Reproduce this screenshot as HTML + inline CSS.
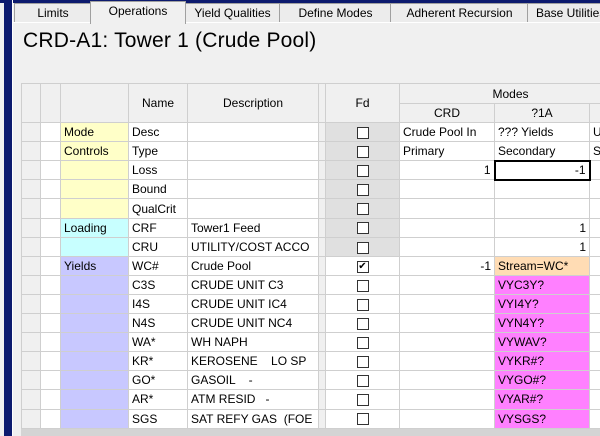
<!DOCTYPE html><html><head><style>
body{margin:0;width:600px;height:436px;overflow:hidden;background:#f0f0f0;font-family:"Liberation Sans",sans-serif;position:relative}
.a{position:absolute;box-sizing:border-box}
.tab{position:absolute;top:3px;height:19px;border:1px solid #a0a0a0;border-bottom:none;background:#ececec;font-size:12px;text-align:center;line-height:19px;color:#000}
table{border-collapse:collapse;position:absolute;left:21px;top:83px;width:600px;font-size:12px;table-layout:fixed}
td{border:1px solid #cfcfcf;height:19.1px;padding:0 3px;white-space:nowrap;overflow:hidden;background:#fff;line-height:16px;box-sizing:border-box}
.h{background:#f0f0f0;text-align:center}
.g{background:#f0f0f0}
.y{background:#ffffc8}.c{background:#c8ffff}.p{background:#c8c8ff}.m{background:#ff80ff}.o{background:#ffdcb4}
.f{background:#e0e0e0;text-align:center}
.r{text-align:right}
.cb{display:inline-block;width:10px;height:10px;border:1px solid #333;vertical-align:middle;background:#fff;font-size:10px;line-height:10px;box-sizing:content-box}
</style></head><body>
<div class="a" style="left:0;top:0;width:600px;height:3px;background:#0c1a6e"></div>
<div class="a" style="left:4px;top:0;width:8px;height:436px;background:#0c1a6e"></div>
<div class="a" style="left:12px;top:0;width:1px;height:436px;background:#fff"></div>
<div class="tab" style="left:14px;width:76px">Limits</div>
<div class="tab" style="left:90px;width:94px;top:1px;height:22px;background:#f0f0f0;z-index:2">Operations</div>
<div class="tab" style="left:184px;width:95px">Yield Qualities</div>
<div class="tab" style="left:279px;width:111px">Define Modes</div>
<div class="tab" style="left:390px;width:137px">Adherent Recursion</div>
<div class="tab" style="left:527px;width:80px;text-align:left;padding-left:8px">Base Utilities</div>
<div class="a" style="left:13px;top:22px;width:587px;height:1px;background:#fff"></div>
<div class="a" style="left:23px;top:29px;font-size:21px;letter-spacing:0.2px">CRD-A1: Tower 1 (Crude Pool)</div>
<div class="a" style="left:21px;top:428px;width:579px;height:8px;background:#d4d4d4"></div>
<table>
<colgroup><col style="width:19px"><col style="width:20px"><col style="width:68px"><col style="width:59px"><col style="width:131px"><col style="width:7px"><col style="width:74px"><col style="width:95px"><col style="width:95px"><col style="width:32px"></colgroup>
<tr><td class="h" rowspan=2 style="height:37px"></td><td class="h" rowspan=2></td><td class="h" rowspan=2></td><td class="h" rowspan=2>Name</td><td class="h" rowspan=2>Description</td><td class="g" rowspan=2></td><td class="h" rowspan=2>Fd</td><td class="h" colspan=3 style="height:20px">Modes</td></tr>
<tr><td class="h" style="height:17px">CRD</td><td class="h">?1A</td><td class="h"></td></tr>
<tr><td class="g"></td><td></td><td class="y">Mode</td><td>Desc</td><td></td><td class="g"></td><td class="f"><span class="cb"></span></td><td>Crude Pool In</td><td>??? Yields</td><td>U</td></tr>
<tr><td class="g"></td><td></td><td class="y">Controls</td><td>Type</td><td></td><td class="g"></td><td class="f"><span class="cb"></span></td><td>Primary</td><td>Secondary</td><td>S</td></tr>
<tr><td class="g"></td><td></td><td class="y"></td><td>Loss</td><td></td><td class="g"></td><td class="f"><span class="cb"></span></td><td class="r">1</td><td class="r" style="border:2px solid #000">-1</td><td></td></tr>
<tr><td class="g"></td><td></td><td class="y"></td><td>Bound</td><td></td><td class="g"></td><td class="f"><span class="cb"></span></td><td></td><td></td><td></td></tr>
<tr><td class="g"></td><td></td><td class="y"></td><td>QualCrit</td><td></td><td class="g"></td><td class="f"><span class="cb"></span></td><td></td><td></td><td></td></tr>
<tr><td class="g"></td><td></td><td class="c">Loading</td><td>CRF</td><td>Tower1 Feed</td><td class="g"></td><td class="f"><span class="cb"></span></td><td></td><td class="r">1</td><td></td></tr>
<tr><td class="g"></td><td></td><td class="c"></td><td>CRU</td><td>UTILITY/COST ACCO</td><td class="g"></td><td class="f"><span class="cb"></span></td><td></td><td class="r">1</td><td></td></tr>
<tr><td class="g"></td><td></td><td class="p">Yields</td><td>WC#</td><td>Crude Pool</td><td class="g"></td><td style="text-align:center"><span class="cb">✔</span></td><td class="r">-1</td><td class="o">Stream=WC*</td><td></td></tr>
<tr><td class="g"></td><td></td><td class="p"></td><td>C3S</td><td>CRUDE UNIT C3</td><td class="g"></td><td style="text-align:center"><span class="cb"></span></td><td></td><td class="m">VYC3Y?</td><td></td></tr>
<tr><td class="g"></td><td></td><td class="p"></td><td>I4S</td><td>CRUDE UNIT IC4</td><td class="g"></td><td style="text-align:center"><span class="cb"></span></td><td></td><td class="m">VYI4Y?</td><td></td></tr>
<tr><td class="g"></td><td></td><td class="p"></td><td>N4S</td><td>CRUDE UNIT NC4</td><td class="g"></td><td style="text-align:center"><span class="cb"></span></td><td></td><td class="m">VYN4Y?</td><td></td></tr>
<tr><td class="g"></td><td></td><td class="p"></td><td>WA*</td><td>WH NAPH</td><td class="g"></td><td style="text-align:center"><span class="cb"></span></td><td></td><td class="m">VYWAV?</td><td></td></tr>
<tr><td class="g"></td><td></td><td class="p"></td><td>KR*</td><td>KEROSENE &nbsp;&nbsp; LO SP</td><td class="g"></td><td style="text-align:center"><span class="cb"></span></td><td></td><td class="m">VYKR#?</td><td></td></tr>
<tr><td class="g"></td><td></td><td class="p"></td><td>GO*</td><td>GASOIL &nbsp;&nbsp; -</td><td class="g"></td><td style="text-align:center"><span class="cb"></span></td><td></td><td class="m">VYGO#?</td><td></td></tr>
<tr><td class="g"></td><td></td><td class="p"></td><td>AR*</td><td>ATM RESID &nbsp; -</td><td class="g"></td><td style="text-align:center"><span class="cb"></span></td><td></td><td class="m">VYAR#?</td><td></td></tr>
<tr><td class="g"></td><td></td><td class="p"></td><td>SGS</td><td>SAT REFY GAS &nbsp;(FOE</td><td class="g"></td><td style="text-align:center"><span class="cb"></span></td><td></td><td class="m">VYSGS?</td><td></td></tr>
</table>
</body></html>
